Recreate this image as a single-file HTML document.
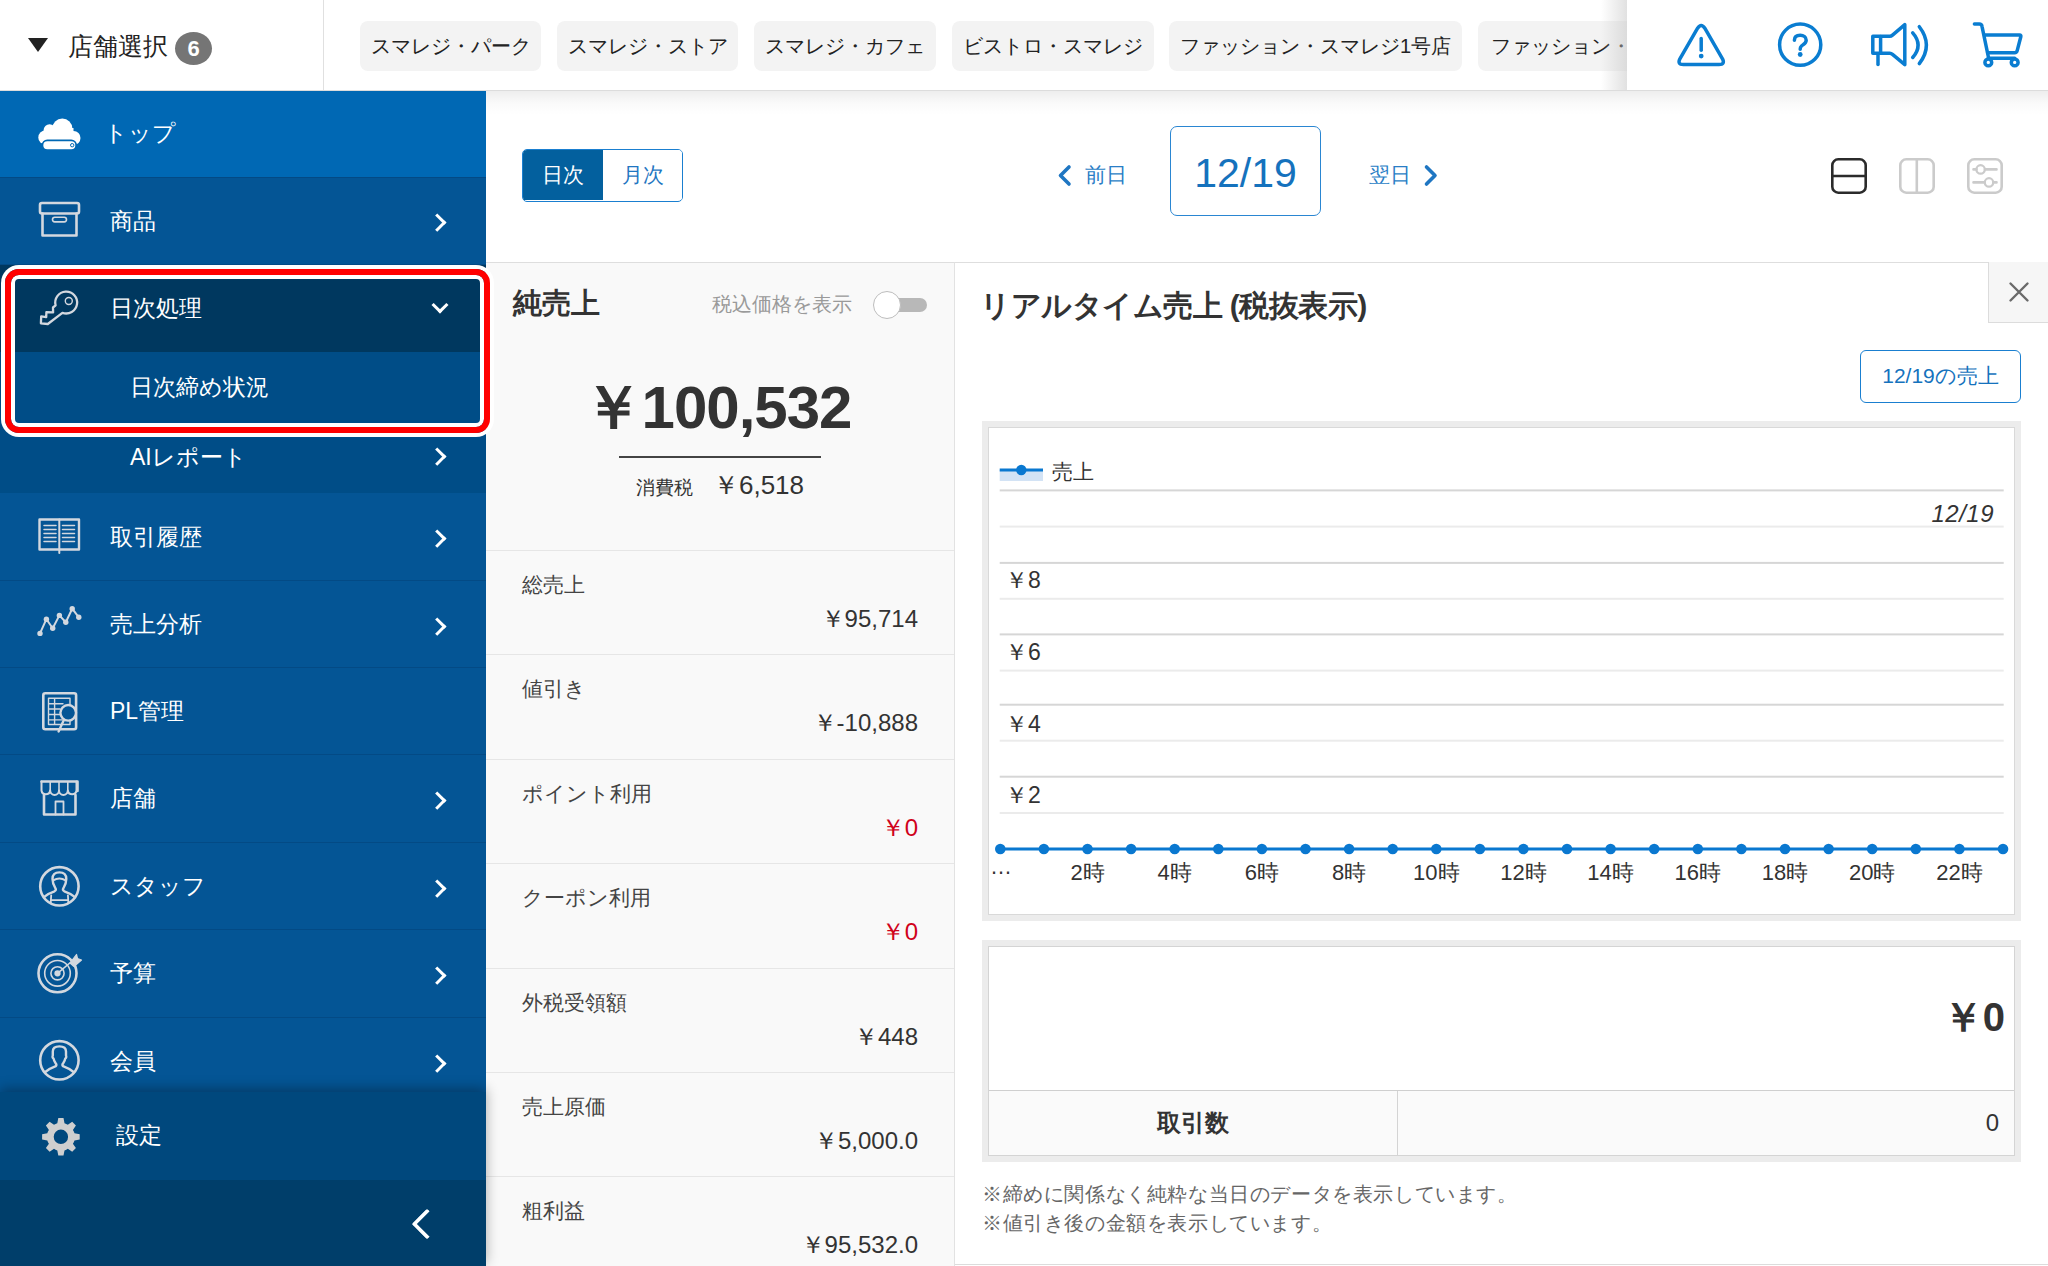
<!DOCTYPE html>
<html lang="ja">
<head>
<meta charset="utf-8">
<style>
*{box-sizing:border-box;margin:0;padding:0}
html,body{width:2048px;height:1266px;overflow:hidden;background:#fff}
body{position:relative;font-family:"Liberation Sans",sans-serif;color:#333}
.abs{position:absolute}
/* top bar */
#top{position:absolute;left:0;top:0;width:2048px;height:91px;background:#fff;border-bottom:1px solid #dcdcdc;z-index:5}
#top .shadowbelow{position:absolute;left:486px;top:90px;width:1562px;height:24px;background:linear-gradient(#f0f0f0,rgba(255,255,255,0))}
.tri{position:absolute;left:28px;top:38px;width:0;height:0;border-left:10px solid transparent;border-right:10px solid transparent;border-top:14px solid #222}
.shopsel{position:absolute;left:68px;top:28px;font-size:25.4px;line-height:36px;color:#222}
.badge{position:absolute;left:175px;top:32px;width:37px;height:33px;border-radius:50%;background:#757575;color:#fff;font-weight:bold;font-size:22px;line-height:33px;text-align:center}
.vdiv{position:absolute;left:323px;top:0;width:1px;height:90px;background:#e0e0e0}
.chip{position:absolute;top:21px;height:50px;background:#f3f3f3;border-radius:8px;font-size:20px;line-height:50px;color:#222;text-align:center;white-space:nowrap;overflow:hidden}
.rightbox{position:absolute;left:1627px;top:0;width:421px;height:90px;background:#fff}
.rightbox:before{content:"";position:absolute;left:-26px;top:0;width:26px;height:90px;background:linear-gradient(to right,rgba(255,255,255,0),rgba(200,200,200,.55))}
/* sidebar */
#side{position:absolute;left:0;top:91px;width:486px;height:1175px;background:#03529a;z-index:4}
.item{position:absolute;left:0;width:486px;height:88px;color:#fff;font-size:24px;border-bottom:1px solid #04457e}
.item .lbl{position:absolute;left:110px;top:0;line-height:88px}
.item .chev{position:absolute;left:430px;top:35px}
.item svg.ic{position:absolute;left:36px}

.row{position:absolute;left:0;width:486px;height:87px;background:#045595;color:#fff;font-size:23px;border-bottom:1px solid #034a85}
.row .lbl{position:absolute;left:110px;top:0;line-height:87px;white-space:nowrap}
.chev{position:absolute;left:431px;top:38.5px;width:12.5px;height:12.5px;border-top:3.4px solid #fff;border-right:3.4px solid #fff;transform:rotate(45deg)}
.chevd{position:absolute;left:434px;top:34px;width:12px;height:12px;border-bottom:3px solid #fff;border-right:3px solid #fff;transform:rotate(45deg)}
.back{position:absolute;left:416px;top:33px;width:22px;height:22px;border-bottom:4px solid #fff;border-left:4px solid #fff;transform:rotate(45deg);border-radius:2px}
.setwrap{position:absolute;left:0;top:1001px;width:486px;height:174px;box-shadow:0 -3px 12px rgba(0,0,0,.32)}
.hl{position:absolute;left:5px;top:178px;width:485px;height:164px;border:6px solid #f00;border-radius:14px;box-shadow:0 0 0 4px #fff, inset 0 0 0 4px #fff}

#main{position:absolute;left:486px;top:90px;width:1562px;height:1176px;background:#fff}
.topshadow{position:absolute;left:0;top:1px;width:1562px;height:24px;background:linear-gradient(rgba(0,0,0,.07),rgba(0,0,0,.02) 50%,rgba(0,0,0,0))}
.toggle{position:absolute;left:36px;top:59px;width:161px;height:53px;border:1.5px solid #1a7fd0;border-radius:5px;overflow:hidden;font-size:21px}
.toggle .t1{position:absolute;left:0;top:0;width:80px;height:50px;background:#03609e;color:#fff;line-height:50px;text-align:center}
.toggle .t2{position:absolute;left:80px;top:0;width:80px;height:50px;background:#fff;color:#1f76c2;line-height:50px;text-align:center}
.navtxt{position:absolute;top:68px;font-size:21px;line-height:34px;color:#2a7ec6}
.datebox{position:absolute;left:684px;top:36px;width:151px;height:90px;border:1.5px solid #2a86d2;border-radius:7px;color:#1572bd;font-size:41px;line-height:92px;text-align:center}

#lp{position:absolute;left:486px;top:262px;width:469px;height:1004px;background:#f9f9f9;border-top:1px solid #dedede;border-right:1px solid #e2e2e2}
.lt{position:absolute;left:27px;top:22px;font-size:29px;font-weight:bold;color:#333;line-height:36px}
.taxlbl{position:absolute;left:226px;top:27px;font-size:20px;color:#9a9a9a;line-height:28px}
.sw{position:absolute;left:387px;top:28px;width:54px;height:28px}
.trk{position:absolute;left:14px;top:7px;width:40px;height:14px;border-radius:7px;background:#b8b8b8}
.knob{position:absolute;left:0;top:0;width:28px;height:28px;border-radius:50%;background:#fff;border:1px solid #bdbdbd}
.big{position:absolute;left:-5px;top:110px;width:472px;text-align:center;font-size:60px;font-weight:bold;color:#333;line-height:70px;letter-spacing:-1px}
.uline{position:absolute;left:133px;top:193px;width:202px;height:1.5px;background:#444}
.taxrow{position:absolute;left:-2px;top:204px;width:472px;text-align:center;line-height:36px;color:#333}
.taxrow .tl{font-size:19px;margin-right:20px}
.taxrow .tv{font-size:26px}
.lrow{position:absolute;left:0;width:468px;height:104.5px;border-top:1px solid #e6e6e6}
.ll{position:absolute;left:36px;top:19px;font-size:21px;color:#444;line-height:30px}
.lv{position:absolute;right:36px;top:51px;font-size:24px;color:#333;line-height:34px}
.lv.red{color:#d0021b}
#rp{position:absolute;left:955px;top:262px;width:1093px;height:1004px;background:#fff;border-top:1px solid #dedede}
.rt{position:absolute;left:25px;top:23px;letter-spacing:-0.5px;font-size:30px;font-weight:bold;color:#333;line-height:40px;white-space:nowrap}
.closebx{position:absolute;left:1033px;top:-1px;width:60px;height:61px;background:#f6f6f6;border-left:1px solid #dcdcdc;border-bottom:1px solid #dcdcdc}
.btn{position:absolute;left:905px;top:87px;width:161px;height:53px;border:1.5px solid #1a7fd0;border-radius:6px;color:#1572bd;font-size:21px;line-height:50px;text-align:center}
.chart{position:absolute;left:27px;top:158px;width:1039px;height:500px;background:#ececec}
.chart .inner{position:absolute;left:6px;top:6px;width:1027px;height:488px;background:#fff;border:1px solid #d9d9d9}
.tot{position:absolute;left:27px;top:677px;width:1039px;height:222px;background:#ececec}
.inner2{position:absolute;left:6px;top:6px;width:1027px;height:210px;background:#fff;border:1px solid #d4d4d4}
.bigzero{position:absolute;right:9px;top:45px;font-size:40px;font-weight:bold;color:#333;line-height:50px}
.cnt{position:absolute;left:0;top:143px;width:1025px;height:65px;background:#fafafa;border-top:1px solid #cfcfcf}
.cl{position:absolute;left:0;top:0;width:409px;height:64px;border-right:1px solid #d4d4d4;text-align:center;font-size:24px;font-weight:bold;line-height:64px;color:#333}
.cv{position:absolute;right:15px;top:0;font-size:24px;line-height:64px;color:#333}
.note{position:absolute;left:27px;top:917px;font-size:20px;letter-spacing:0.6px;line-height:29px;color:#666;white-space:nowrap}
.botline{position:absolute;left:0;top:1001px;width:1093px;height:1px;background:#dcdcdc}
</style>
</head>
<body>

<div id="main">
  <div class="toggle"><div class="t1">日次</div><div class="t2">月次</div></div>
  <div class="navtxt" style="left:599px">前日</div>
  <div class="navtxt" style="left:883px">翌日</div>
  <div class="datebox">12/19</div>
  <div class="topshadow"></div>
</div>
<svg class="abs" style="left:0;top:0;z-index:2" width="2048" height="1266" viewBox="0 0 2048 1266">
  <g fill="none" stroke="#1f76c2" stroke-width="3.6" stroke-linecap="round" stroke-linejoin="round">
    <path d="M1069 167L1060.5 175.5L1069 184"/>
    <path d="M1426.5 167L1435 175.5L1426.5 184"/>
  </g>
  <g fill="none" stroke-width="2.6" stroke-linecap="round" stroke-linejoin="round">
    <rect x="1832.3" y="159.3" width="33.4" height="33.4" rx="6" stroke="#2b2b2b"/>
    <path d="M1832.3 176H1865.7" stroke="#2b2b2b"/>
    <rect x="1900.3" y="159.3" width="33.4" height="33.4" rx="6" stroke="#cbcbcb"/>
    <path d="M1916.8 159.3V192.7" stroke="#cbcbcb"/>
    <rect x="1968.3" y="159.3" width="33.4" height="33.4" rx="6" stroke="#cbcbcb"/>
    <path d="M1973.5 169.4H1976.5M1985 169.4H1996.5M1973.5 182.4H1984.5M1993.3 182.4H1996.5" stroke="#cbcbcb"/>
    <circle cx="1980.6" cy="169.4" r="4.2" stroke="#cbcbcb" stroke-width="2.2"/>
    <circle cx="1989" cy="182.4" r="4.2" stroke="#cbcbcb" stroke-width="2.2"/>
  </g>
</svg>

<div id="lp">
  <div class="lt">純売上</div>
  <div class="taxlbl">税込価格を表示</div>
  <div class="sw"><div class="trk"></div><div class="knob"></div></div>
  <div class="big">￥100,532</div>
  <div class="uline"></div>
  <div class="taxrow"><span class="tl">消費税</span><span class="tv">￥6,518</span></div>
  <div class="lrow" style="top:286.5px"><div class="ll">総売上</div><div class="lv">￥95,714</div></div>
  <div class="lrow" style="top:391.3px"><div class="ll">値引き</div><div class="lv">￥-10,888</div></div>
  <div class="lrow" style="top:495.7px"><div class="ll">ポイント利用</div><div class="lv red">￥0</div></div>
  <div class="lrow" style="top:600.2px"><div class="ll">クーポン利用</div><div class="lv red">￥0</div></div>
  <div class="lrow" style="top:704.5px"><div class="ll">外税受領額</div><div class="lv">￥448</div></div>
  <div class="lrow" style="top:808.8px"><div class="ll">売上原価</div><div class="lv">￥5,000.0</div></div>
  <div class="lrow" style="top:913.3px"><div class="ll">粗利益</div><div class="lv">￥95,532.0</div></div>
</div>

<div id="rp">
  <div class="rt">リアルタイム売上 (税抜表示)</div>
  <div class="closebx"><svg width="60" height="60" viewBox="0 0 60 60"><path d="M21.5 21.5L38.5 38.5M38.5 21.5L21.5 38.5" stroke="#6a6a6a" stroke-width="2.4" stroke-linecap="round" fill="none"/></svg></div>
  <div class="btn">12/19の売上</div>
  <div class="chart">
    <div class="inner"></div>
  </div>
  <div class="tot">
    <div class="inner2">
      <div class="bigzero">￥0</div>
      <div class="cnt"><div class="cl">取引数</div><div class="cv">0</div></div>
    </div>
  </div>
  <div class="note">※締めに関係なく純粋な当日のデータを表示しています。<br>※値引き後の金額を表示しています。</div>
  <div class="botline"></div>
</div>
<svg class="abs" style="left:0;top:0;z-index:1" width="2048" height="1266" viewBox="0 0 2048 1266">
  <rect x="999.7" y="489.4" width="1004" height="2" fill="#d6d6d6"/><rect x="999.7" y="525.6" width="1004" height="2" fill="#ebebeb"/><rect x="999.7" y="561.9" width="1004" height="2" fill="#d6d6d6"/><rect x="999.7" y="597.8" width="1004" height="2" fill="#ebebeb"/><rect x="999.7" y="633.4" width="1004" height="2" fill="#d6d6d6"/><rect x="999.7" y="669.6" width="1004" height="2" fill="#ebebeb"/><rect x="999.7" y="703.7" width="1004" height="2" fill="#d6d6d6"/><rect x="999.7" y="739.7" width="1004" height="2" fill="#ebebeb"/><rect x="999.7" y="775.7" width="1004" height="2" fill="#d6d6d6"/><rect x="999.7" y="812.0" width="1004" height="2" fill="#ebebeb"/>
  <rect x="999.7" y="470" width="43.3" height="11" fill="#d3e3f5"/>
  <rect x="999.7" y="468.5" width="43.3" height="3" fill="#0a78d0"/>
  <circle cx="1021.3" cy="470" r="5.2" fill="#0a78d0"/>
  <g font-family="Liberation Sans, sans-serif" font-size="21" fill="#333">
    <text x="1052" y="479">売上</text>
    <text x="1005" y="588" font-size="23">￥8</text>
    <text x="1005" y="660" font-size="23">￥6</text>
    <text x="1005" y="731.5" font-size="23">￥4</text>
    <text x="1005" y="803" font-size="23">￥2</text>
    <text x="1994" y="522" font-size="24" font-style="italic" text-anchor="end" letter-spacing="0.5">12/19</text>
    <g text-anchor="middle" font-size="22"><text x="1087.5" y="880">2時</text><text x="1174.7" y="880">4時</text><text x="1261.9" y="880">6時</text><text x="1349.1" y="880">8時</text><text x="1436.3" y="880">10時</text><text x="1523.4" y="880">12時</text><text x="1610.6" y="880">14時</text><text x="1697.8" y="880">16時</text><text x="1785.0" y="880">18時</text><text x="1872.2" y="880">20時</text><text x="1959.4" y="880">22時</text><text x="1001" y="874">…</text></g>
  </g>
  <rect x="1000.3" y="847.5" width="1002.7" height="3" fill="#0a78d0"/>
  <g fill="#0a78d0"><circle cx="1000.3" cy="849" r="5.3"/><circle cx="1043.9" cy="849" r="5.3"/><circle cx="1087.5" cy="849" r="5.3"/><circle cx="1131.1" cy="849" r="5.3"/><circle cx="1174.7" cy="849" r="5.3"/><circle cx="1218.3" cy="849" r="5.3"/><circle cx="1261.9" cy="849" r="5.3"/><circle cx="1305.5" cy="849" r="5.3"/><circle cx="1349.1" cy="849" r="5.3"/><circle cx="1392.7" cy="849" r="5.3"/><circle cx="1436.3" cy="849" r="5.3"/><circle cx="1479.9" cy="849" r="5.3"/><circle cx="1523.4" cy="849" r="5.3"/><circle cx="1567.0" cy="849" r="5.3"/><circle cx="1610.6" cy="849" r="5.3"/><circle cx="1654.2" cy="849" r="5.3"/><circle cx="1697.8" cy="849" r="5.3"/><circle cx="1741.4" cy="849" r="5.3"/><circle cx="1785.0" cy="849" r="5.3"/><circle cx="1828.6" cy="849" r="5.3"/><circle cx="1872.2" cy="849" r="5.3"/><circle cx="1915.8" cy="849" r="5.3"/><circle cx="1959.4" cy="849" r="5.3"/><circle cx="2003.0" cy="849" r="5.3"/></g>
</svg>
<div id="top">
  <div class="tri"></div>
  <div class="shopsel">店舗選択</div>
  <div class="badge">6</div>
  <div class="vdiv"></div>
  <div class="chip" style="left:360px;width:181px">スマレジ・パーク</div>
  <div class="chip" style="left:557px;width:181px">スマレジ・ストア</div>
  <div class="chip" style="left:754px;width:182px">スマレジ・カフェ</div>
  <div class="chip" style="left:952px;width:202px">ビストロ・スマレジ</div>
  <div class="chip" style="left:1169px;width:293px">ファッション・スマレジ1号店</div>
  <div class="chip" style="left:1478px;width:170px;text-align:left;padding-left:13px">ファッション・スマレジ2号店</div>
  <div class="rightbox"><svg class="abs" style="left:0;top:0" width="421" height="90" viewBox="1627 0 421 90">
  <g fill="none" stroke="#0a7dd1" stroke-width="3.5" stroke-linecap="round" stroke-linejoin="round">
    <path d="M1697.6 28.2Q1701.2 22.6 1704.8 28.2L1722.5 58.8Q1725.3 64.5 1719 64.5H1683.4Q1677.1 64.5 1679.9 58.8Z"/>
    <path d="M1701.2 38.5V50.2"/>
    <circle cx="1800.2" cy="44.7" r="20.6"/>
    <path d="M1794.4 40.3C1794.4 36.8 1797 35.3 1800.2 35.3C1803.6 35.3 1806.2 37.3 1806.2 40.2C1806.2 43.3 1803.5 44.3 1801.5 46C1800.5 46.9 1800.2 47.7 1800.2 49.2"/>
    <path d="M1872.8 36.2H1889.8Q1891.2 36.2 1892.5 35.1L1904.8 24.7V64.7L1892.5 54.4Q1891.2 53.3 1889.8 53.3H1872.8Z"/>
    <path d="M1880.6 36.5V53"/>
    <path d="M1878 54.5V64.5"/>
    <path d="M1912.7 32.8Q1923.5 45.1 1912.7 57.5"/>
    <path d="M1919.3 26.7Q1933.5 45.1 1919.3 63.6"/>
    <path d="M1974.4 24.1H1979.4Q1981.6 24.1 1982 26.3L1988.6 58"/>
    <path d="M1984.9 35.1H2019.6Q2021.3 35.1 2020.8 36.8L2017.2 50.6Q2016.7 52.7 2014.6 52.7H1987.6"/>
    <path d="M1988.3 58.3H2014.7"/>
    <circle cx="1988.3" cy="62.4" r="3.4"/>
    <circle cx="2014.7" cy="62.4" r="3.4"/>
  </g>
  <g fill="#0a7dd1"><circle cx="1701.2" cy="56.1" r="2.4"/><circle cx="1800.2" cy="54.5" r="2.4"/></g>
</svg></div>
</div>
<div id="side">
  <div class="row" style="top:0;height:87px;background:#0068b4"><span class="lbl" style="line-height:85px;left:104px">トップ</span></div>
  <div class="row" style="top:87px;height:87px;background:#045595"><span class="lbl" style="line-height:86px">商品</span><i class="chev" style="top:37.5px"></i></div>
  <div class="row" style="top:174px;height:87px;background:#00385f;border:0"><span class="lbl" style="line-height:87px">日次処理</span><i class="chevd"></i></div>
  <div class="row sub" style="top:261px;height:70px;background:#004d87;border:0"><span class="lbl" style="left:130px;line-height:70px">日次締め状況</span></div>
  <div class="row sub" style="top:331px;height:71px;background:#004d87;border:0"><span class="lbl" style="left:130px;line-height:71px">AIレポート</span><i class="chev" style="top:28px"></i></div>
  <div class="row" style="top:402px;height:88px"><span class="lbl" style="line-height:89px">取引履歴</span><i class="chev"></i></div>
  <div class="row" style="top:490px"><span class="lbl">売上分析</span><i class="chev"></i></div>
  <div class="row" style="top:577px"><span class="lbl">PL管理</span></div>
  <div class="row" style="top:664px;height:88px"><span class="lbl">店舗</span><i class="chev"></i></div>
  <div class="row" style="top:752px"><span class="lbl">スタッフ</span><i class="chev"></i></div>
  <div class="row" style="top:839px;height:88px"><span class="lbl">予算</span><i class="chev"></i></div>
  <div class="row" style="top:927px;height:88px;border:0"><span class="lbl">会員</span><i class="chev"></i></div>
  <div class="setwrap">
  <div class="row" style="top:0;height:88px;background:#00487d;border:0"><span class="lbl" style="left:116px">設定</span></div>
  <div class="row" style="top:88px;height:86px;background:#003e6a;border:0"><i class="back"></i></div>
  </div>
  <div class="hl"></div>
</div>
<svg class="abs" style="left:0;top:0;z-index:6" width="486" height="1266" viewBox="0 0 486 1266">
 <g fill="none" stroke="#d3d8df" stroke-width="2.6" stroke-linecap="round" stroke-linejoin="round">
  <!-- box -->
  <rect x="40" y="203" width="39" height="10.5" rx="2"/>
  <path d="M42.5 213.5V235.5H76.5V213.5"/>
  <rect x="52.5" y="217.3" width="14" height="4.6" rx="2.3" stroke-width="1.6"/>
  <!-- key -->
  <path d="M62.4 312.8A10.95 10.95 0 1 0 55.6 305.3L53 307.5L53.1 312.4L46.4 312.1L46.2 317.2L41.2 316.4L40.9 323.3L47.8 324L62.4 312.8Z" stroke-width="2.3"/>
  <circle cx="68.8" cy="301" r="3.5" stroke-width="1.4"/>
  <!-- book -->
  <path d="M39.5 519.5H79V549.5H39.5Z" stroke-width="2.4"/>
  <path d="M59.3 519.5V553" stroke-width="2"/>
  <path d="M44 525.5H56M44 529.5H56M44 533.5H56M44 537.5H56M44 541.5H56M62.5 525.5H74.5M62.5 529.5H74.5M62.5 533.5H74.5M62.5 537.5H74.5M62.5 541.5H74.5" stroke-width="1.5"/>
  <!-- chart -->
  <path d="M40 633.4L46.4 619.2L52.7 628.2L59.4 615.4L65.8 622.3L72.2 608.7L78.8 617.3" stroke-width="2"/>
  <!-- PL -->
  <rect x="43.3" y="693.3" width="32.8" height="36" rx="2" stroke-width="2.6"/>
  <path d="M48.5 698.3H70V724.5H48.5Z M48.5 703.8H63 M48.5 709H60 M48.5 714.5H60 M48.5 719.9H62 M54.6 698.3V724.5" stroke-width="1.4"/>
  <circle cx="68.2" cy="712.8" r="7.8" stroke-width="2.4" fill="#045595"/>
  <path d="M63.6 720.5L58.6 731.5" stroke-width="2.4"/>
  <!-- shop -->
  <path d="M41.5 781.5H77.5V791" stroke-width="2.6"/>
  <path d="M41.5 781.5V790.5A4.4 4.4 0 0 0 50.2 790.5A4.4 4.4 0 0 0 59 790.5A4.4 4.4 0 0 0 67.8 790.5A4.4 4.4 0 0 0 76.5 790.5V781.5" stroke-width="2"/>
  <path d="M50.2 782V790.5M59 782V790.5M67.8 782V790.5" stroke-width="1.6"/>
  <path d="M44 795V814.5H75.5V795" stroke-width="2.6"/>
  <path d="M55.5 814.5V801.5H63.5V814.5" stroke-width="1.8"/>
  <!-- staff -->
  <circle cx="59.4" cy="886.3" r="19.2" stroke-width="2.6"/>
  <path d="M44.2 896.8C47.5 894 51 892.5 54.5 891.3C56 890.5 56.2 889.5 55.5 888.5C54 886 52.5 883 52.5 879C52.5 875 55 872.4 59.4 872.4C63.8 872.4 66.3 875 66.3 879C66.3 883 64.8 886 63.3 888.5C62.6 889.5 62.8 890.5 64.3 891.3C67.8 892.5 71.3 894 74.6 896.8" stroke-width="2.4"/>
  <path d="M53.2 880.4Q59.4 876.6 65.6 880.4" stroke-width="2"/>
  <path d="M51.2 895.3L50.7 903.3M67.9 895.3L68.4 903.3M50.9 900.2H68.2" stroke-width="1.8"/>
  <!-- target -->
  <circle cx="57.5" cy="973.3" r="19" stroke-width="2.6"/>
  <circle cx="57.5" cy="973.3" r="12.8" stroke-width="1.6"/>
  <circle cx="57.5" cy="973.3" r="6.6" stroke-width="1.6"/>
  <circle cx="57.5" cy="973.3" r="2.4" fill="#d3d8df" stroke-width="1.5"/>
  <path d="M57.5 973.3L71 962" stroke-width="1.6"/>
  <path d="M70 963L76.5 954.5L77.5 958.5L81.5 960L74 966.5Z" fill="#d3d8df" stroke-width="1.2"/>
  <!-- member -->
  <circle cx="59.4" cy="1060.3" r="19.2" stroke-width="2.6"/>
  <path d="M45.6 1071.7C49 1069 52.5 1067.5 55.8 1066.2C56.5 1065.5 56.3 1064 55.5 1063C54.5 1061.5 53.8 1060 53.5 1058.5C52.5 1058 52.3 1056.5 52.8 1055.5L52.8 1051.5C52.8 1048 55.5 1046.4 59.4 1046.4C63.3 1046.4 66 1048 66 1051.5L66 1055.5C66.5 1056.5 66.3 1058 65.3 1058.5C65 1060 64.3 1061.5 63.3 1063C62.5 1064 62.3 1065.5 63 1066.2C66.3 1067.5 69.8 1069 73.2 1071.7" stroke-width="2.4"/>
 </g>
 <g fill="#d3d8df">
  <circle cx="40" cy="633.4" r="2.7"/><circle cx="46.4" cy="619.2" r="2.7"/><circle cx="52.7" cy="628.2" r="2.7"/><circle cx="59.4" cy="615.4" r="2.7"/><circle cx="65.8" cy="622.3" r="2.7"/><circle cx="72.2" cy="608.7" r="2.7"/><circle cx="78.8" cy="617.3" r="2.7"/>
 </g>
 <!-- cloud -->
 <g fill="#fff">
  <circle cx="62.3" cy="128.6" r="10.1"/>
  <circle cx="49.6" cy="130.2" r="6"/>
  <circle cx="45.2" cy="137.4" r="6.9"/>
  <circle cx="73.6" cy="138" r="6.9"/>
  <rect x="45" y="128" width="28.5" height="13"/>
 </g>
 <rect x="42.4" y="140.4" width="33.8" height="9.8" rx="4.9" fill="#fff" stroke="#0068b4" stroke-width="1.8"/>
 <circle cx="72.2" cy="145.2" r="1.7" fill="none" stroke="#0068b4" stroke-width="1"/>
 <!-- gear -->
 <path fill="#cfcfcf" fill-rule="evenodd" d="M58.3 1118H63.5L64.5 1123.2C65.7 1123.6 66.8 1124.1 67.8 1124.8L72.2 1121.8L75.9 1125.5L72.9 1129.9C73.6 1130.9 74.1 1132 74.5 1133.2L79.7 1134.2V1139.4L74.5 1140.4C74.1 1141.6 73.6 1142.7 72.9 1143.7L75.9 1148.1L72.2 1151.8L67.8 1148.8C66.8 1149.5 65.7 1150 64.5 1150.4L63.5 1155.6H58.3L57.3 1150.4C56.1 1150 55 1149.5 54 1148.8L49.6 1151.8L45.9 1148.1L48.9 1143.7C48.2 1142.7 47.7 1141.6 47.3 1140.4L42.1 1139.4V1134.2L47.3 1133.2C47.7 1132 48.2 1130.9 48.9 1129.9L45.9 1125.5L49.6 1121.8L54 1124.8C55 1124.1 56.1 1123.6 57.3 1123.2Z M60.9 1129.6A7.2 7.2 0 1 0 60.9 1144A7.2 7.2 0 1 0 60.9 1129.6Z"/>
</svg>
</body>
</html>
